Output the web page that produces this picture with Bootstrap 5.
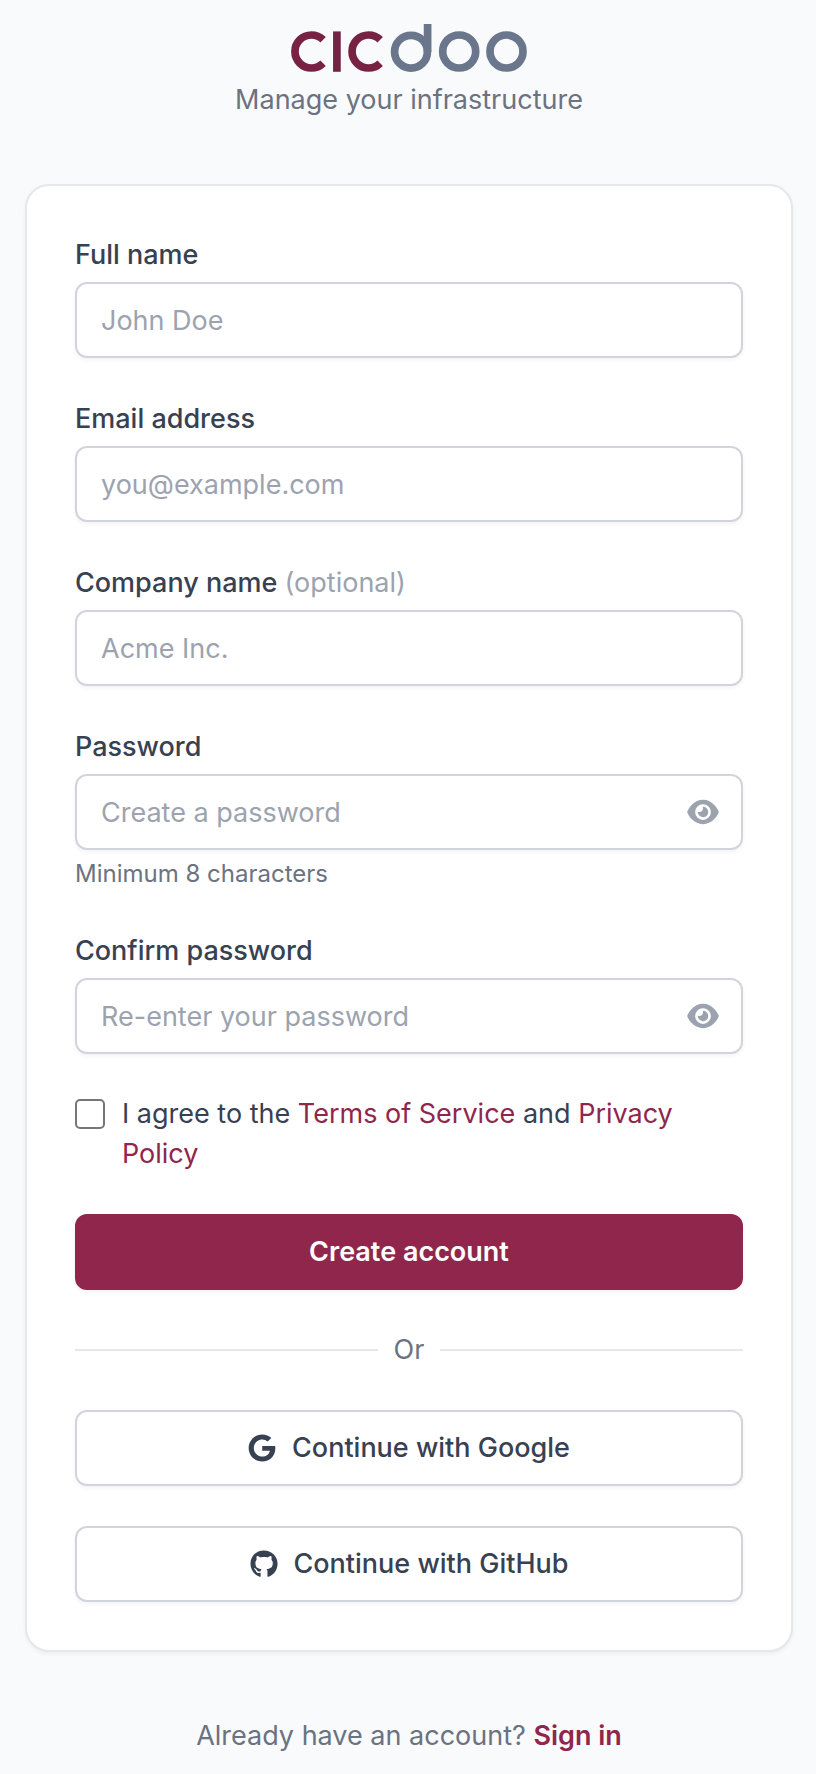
<!DOCTYPE html>
<html lang="en">
<head>
<meta charset="utf-8">
<meta name="viewport" content="width=device-width, initial-scale=1">
<title>cicdoo – Create account</title>
<link href="https://cdn.jsdelivr.net/npm/bootstrap@5.3.0/dist/css/bootstrap.min.css" rel="stylesheet">
<style>
  :root { --brand: #90264b; --ink: #374151; --soft: #6b7280; --faint: #9ca3af; --edge: #d1d5db; }
  body { background: #f9fafc; color: var(--ink); font-family: Inter, "Liberation Sans", sans-serif; font-size: 27px; line-height: 40px; }
  a { color: var(--brand); text-decoration: none; }
  a:hover { color: #782243; }
  .page-shell { padding: 24px 23px 16px 25px; }
  .brand-logo { width: 236px; height: 48px; }
  .text-soft { color: var(--soft); }
  .text-faint { color: var(--faint); font-weight: 400; }
  .signup-card { margin: 64px 0; padding: 48px; border: 2px solid #e5e7eb; border-radius: 24px; box-shadow: 0 2px 4px rgba(0,0,0,.05); }
  .signup-form { gap: 40px; }
  .form-label { margin-bottom: 6px; font-weight: 550; line-height: 42px; }
  .form-control { height: 76px; padding: 16px 24px; border: 2px solid var(--edge); border-radius: 12px; color: var(--ink); font-size: 27px; line-height: 40px; box-shadow: 0 2px 4px rgba(0,0,0,.05); }
  .form-control::placeholder { color: var(--faint); }
  .form-control:focus { border-color: var(--brand); box-shadow: 0 0 0 2px rgba(144,38,75,.2); }
  .has-toggle { padding-right: 80px; }
  .eye-toggle { color: var(--faint); padding: 0 24px 0 16px; border: 0; }
  .eye-toggle svg { width: 32px; height: 28px; }
  .hint { margin-top: 8px; font-size: 24px; line-height: 32px; color: var(--soft); }
  .agree { gap: 17px; }
  .agree .form-check-input { width: 30px; height: 30px; margin: 5px 0; border: 2px solid #767676; border-radius: 5px; }
  .agree .form-check-input:checked { background-color: var(--brand); border-color: var(--brand); }
  .btn-tall { height: 76px; gap: 16px; border-width: 2px; border-radius: 12px; font-size: 27px; line-height: 40px; box-shadow: 0 2px 4px rgba(0,0,0,.05); }
  .btn-brand, .btn-brand:hover { background: var(--brand); border-color: var(--brand); color: #fff; }
  .btn-brand { font-weight: 600; }
  .btn-social, .btn-social:hover { background: #fff; border-color: var(--edge); color: var(--ink); }
  .btn-social { font-weight: 550; }
  .btn-social svg { width: 28px; height: 28px; }
  .rule { height: 2px; background: #e5e7eb; }
</style>
</head>
<body>
<div class="page-shell container-fluid">
  <header class="text-center">
    <svg class="brand-logo d-block mx-auto" viewBox="0 0 236 48" role="img" aria-label="cicdoo" fill="none" stroke-width="7.7">
      <g stroke="#782243">
        <path d="M32.1 15.8A16.5 16.5 0 1 0 32.1 39.2"/>
        <path d="M45.9 7.4V47.8"/>
        <path d="M89.2 15.8A16.5 16.5 0 1 0 89.2 39.2"/>
      </g>
      <g stroke="#6a768b">
        <circle cx="120" cy="27.7" r="16.4"/>
        <path d="M136.6 0V28"/>
        <circle cx="168.2" cy="27.5" r="16.5"/>
        <circle cx="215.5" cy="27.5" r="16.5"/>
      </g>
    </svg>
    <p class="text-soft mt-2 mb-0">Manage your infrastructure</p>
  </header>

  <main class="card signup-card">
    <form class="signup-form d-flex flex-column">
      <div class="d-flex flex-column">
        <label class="form-label" for="name">Full name</label>
        <input class="form-control" id="name" type="text" placeholder="John Doe">
      </div>
      <div class="d-flex flex-column">
        <label class="form-label" for="email">Email address</label>
        <input class="form-control" id="email" type="email" placeholder="you@example.com">
      </div>
      <div class="d-flex flex-column">
        <label class="form-label" for="company">Company name <span class="text-faint">(optional)</span></label>
        <input class="form-control" id="company" type="text" placeholder="Acme Inc.">
      </div>
      <div class="d-flex flex-column">
        <label class="form-label" for="password">Password</label>
        <div class="position-relative">
          <input class="form-control has-toggle" id="password" type="password" placeholder="Create a password">
          <button class="btn eye-toggle position-absolute top-0 end-0 h-100 d-flex align-items-center" type="button" aria-label="Show password">
            <svg viewBox="0 0 576 512" fill="currentColor" aria-hidden="true"><path id="eye" d="M288 32c-80.8 0-145.5 36.8-192.6 80.6C48.6 156 17.3 208 2.5 243.7c-3.3 7.9-3.3 16.7 0 24.6C17.3 304 48.6 356 95.4 399.4C142.5 443.2 207.2 480 288 480s145.5-36.8 192.6-80.6c46.8-43.5 78.1-95.4 93-131.1c3.3-7.9 3.3-16.7 0-24.6c-14.9-35.7-46.2-87.7-93-131.1C433.5 68.8 368.8 32 288 32zM144 256a144 144 0 1 1 288 0 144 144 0 1 1 -288 0zm144-64c0 35.3-28.7 64-64 64c-7.1 0-13.9-1.2-20.3-3.3c-5.5-1.8-11.9 1.6-11.7 7.4c.3 6.9 1.3 13.8 3.2 20.7c13.7 51.2 66.4 81.6 117.6 67.9s81.6-66.4 67.9-117.6c-11.1-41.5-47.8-69.4-88.6-71.1c-5.8-.2-9.2 6.1-7.4 11.7c2.1 6.4 3.3 13.2 3.3 20.3z"/></svg>
          </button>
        </div>
        <div class="hint">Minimum 8 characters</div>
      </div>
      <div class="d-flex flex-column">
        <label class="form-label" for="confirm">Confirm password</label>
        <div class="position-relative">
          <input class="form-control has-toggle" id="confirm" type="password" placeholder="Re-enter your password">
          <button class="btn eye-toggle position-absolute top-0 end-0 h-100 d-flex align-items-center" type="button" aria-label="Show confirmed password">
            <svg viewBox="0 0 576 512" fill="currentColor" aria-hidden="true"><use href="#eye"/></svg>
          </button>
        </div>
      </div>
      <div class="agree d-flex align-items-start">
        <input class="form-check-input flex-shrink-0" id="agree" type="checkbox">
        <label for="agree">I agree to the <a href="#">Terms of Service</a> and <a href="#">Privacy Policy</a></label>
      </div>
      <button class="btn btn-tall btn-brand w-100" type="submit">Create account</button>
      <div class="d-flex align-items-center gap-3">
        <div class="rule flex-grow-1"></div>
        <span class="text-soft">Or</span>
        <div class="rule flex-grow-1"></div>
      </div>
      <button class="btn btn-tall btn-social w-100 d-flex align-items-center justify-content-center" type="button">
        <svg viewBox="0 0 488 512" fill="currentColor" aria-hidden="true"><path d="M488 261.8C488 403.3 391.1 504 248 504 110.8 504 0 393.2 0 256S110.8 8 248 8c66.8 0 123 24.5 166.3 64.9l-67.5 64.9C258.5 52.6 94.3 116.6 94.3 256c0 86.5 69.1 156.6 153.7 156.6 98.2 0 135-70.4 140.8-106.9H248v-85.3h236.1c2.3 12.7 3.9 24.9 3.9 41.4z"/></svg>
        Continue with Google
      </button>
      <button class="btn btn-tall btn-social w-100 d-flex align-items-center justify-content-center" type="button">
        <svg viewBox="0 0 496 512" fill="currentColor" aria-hidden="true"><path d="M165.9 397.4c0 2-2.3 3.6-5.2 3.6-3.3.3-5.6-1.3-5.6-3.6 0-2 2.3-3.6 5.2-3.6 3-.3 5.6 1.3 5.6 3.6zm-31.1-4.5c-.7 2 1.3 4.3 4.3 4.9 2.6 1 5.6 0 6.2-2s-1.3-4.3-4.3-5.2c-2.6-.7-5.5.3-6.2 2.3zm44.2-1.7c-2.9.7-4.9 2.6-4.6 4.9.3 2 2.9 3.3 5.9 2.6 2.9-.7 4.9-2.6 4.6-4.6-.3-1.9-3-3.2-5.9-2.9zM244.8 8C106.1 8 0 113.3 0 252c0 110.9 69.8 205.8 169.5 239.2 12.8 2.3 17.3-5.6 17.3-12.1 0-6.2-.3-40.4-.3-61.4 0 0-70 15-84.7-29.8 0 0-11.4-29.1-27.8-36.6 0 0-22.9-15.7 1.6-15.4 0 0 24.9 2 38.6 25.8 21.9 38.6 58.6 27.5 72.9 20.9 2.3-16 8.8-27.1 16-33.7-55.9-6.2-112.3-14.3-112.3-110.5 0-27.5 7.6-41.3 23.6-58.9-2.6-6.5-11.1-33.3 2.6-67.9 20.9-6.5 69 27 69 27 20-5.6 41.5-8.5 62.8-8.5s42.8 2.9 62.8 8.5c0 0 48.1-33.6 69-27 13.7 34.7 5.2 61.4 2.6 67.9 16 17.7 25.8 31.5 25.8 58.9 0 96.5-58.9 104.2-114.8 110.5 9.2 7.9 17 22.9 17 46.4 0 33.7-.3 75.4-.3 83.6 0 6.5 4.6 14.4 17.3 12.1C428.2 457.8 496 362.9 496 252 496 113.3 383.5 8 244.8 8z"/></svg>
        Continue with GitHub
      </button>
    </form>
  </main>

  <p class="text-center text-soft mb-0">Already have an account? <a class="fw-semibold" href="#">Sign in</a></p>
</div>
<script src="https://cdn.jsdelivr.net/npm/bootstrap@5.3.0/dist/js/bootstrap.bundle.min.js"></script>
</body>
</html>
